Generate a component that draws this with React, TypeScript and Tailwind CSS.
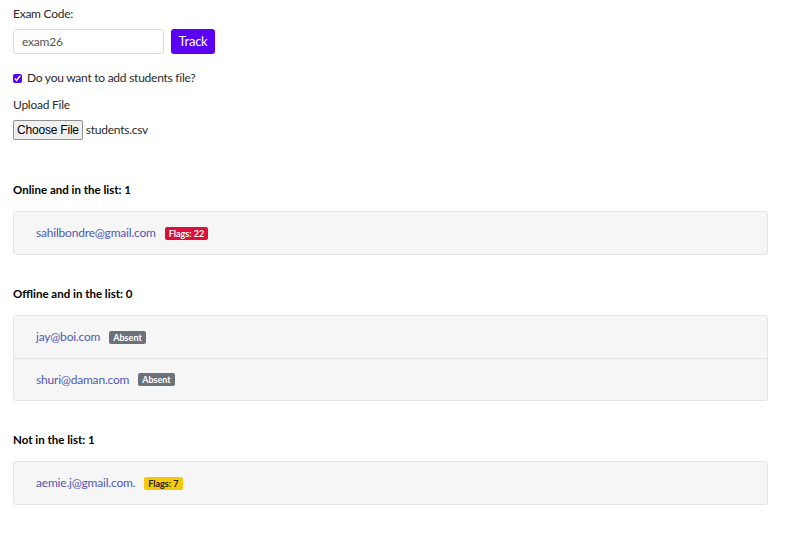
import { useState } from 'react';

type Entry = { email: string; badge: string; tone: 'red' | 'gray' | 'yellow' };

const sections: { title: string; items: Entry[] }[] = [
  {
    title: 'Online and in the list: 1',
    items: [{ email: 'sahilbondre@gmail.com', badge: 'Flags: 22', tone: 'red' }],
  },
  {
    title: 'Offline and in the list: 0',
    items: [
      { email: 'jay@boi.com', badge: 'Absent', tone: 'gray' },
      { email: 'shuri@daman.com', badge: 'Absent', tone: 'gray' },
    ],
  },
  {
    title: 'Not in the list: 1',
    items: [{ email: 'aemie.j@gmail.com.', badge: 'Flags: 7', tone: 'yellow' }],
  },
];

const toneClass = {
  red: 'bg-[#dc0f3c] text-white',
  gray: 'bg-[#6b717a] text-white',
  yellow: 'bg-[#f7c70a] text-[#222]',
};

function Badge({ text, tone }: { text: string; tone: Entry['tone'] }) {
  return (
    <span
      className={`ml-[9px] inline-flex h-[13px] items-center rounded-[2px] px-[4px] text-[9px] font-bold leading-none tracking-normal ${toneClass[tone]}`}
    >
      {text}
    </span>
  );
}

export default function App() {
  const [code, setCode] = useState('exam26');
  const [withFile, setWithFile] = useState(true);

  return (
    <div
      className="min-h-[537px] bg-white px-[13px] pt-[4px] text-[12px] tracking-[-0.25px] text-[#2b2b2b]"
      style={{ fontFamily: 'Lato, "Open Sans", sans-serif' }}
    >
      <div className="leading-[20px]">Exam Code:</div>
      <div className="mt-[5px] flex gap-[7px]">
        <input
          value={code}
          onChange={(e) => setCode(e.target.value)}
          className="h-[25px] w-[151px] rounded-[3px] border border-[#dcdcdc] px-[8px] text-[12px] tracking-[-0.2px] text-[#555] outline-none"
        />
        <button className="h-[25px] w-[44px] rounded-[3px] bg-[#5c00f5] text-[13px] text-white">
          Track
        </button>
      </div>

      <label className="mt-[14px] flex h-[20px] items-center gap-[5px]">
        <input
          type="checkbox"
          checked={withFile}
          onChange={(e) => setWithFile(e.target.checked)}
          className="m-0 h-[9px] w-[9px] accent-[#5c00f5]"
        />
        <span>Do you want to add students file?</span>
      </label>

      <div className="mt-[7px] leading-[20px]">Upload File</div>
      <div className="mt-[5px] flex h-[20px] items-center">
        <span
          className="flex h-[20px] items-center rounded-[2px] border border-[#8f8f8f] bg-[#efefef] px-[3px] text-[12px] tracking-[-0.2px] text-black"
          style={{ fontFamily: '"Liberation Sans", Arial, sans-serif' }}
        >
          Choose File
        </span>
        <span className="ml-[3px]">students.csv</span>
      </div>

      <div className="mt-[40px] flex flex-col">
        {sections.map((s, i) => (
          <div key={s.title} className={i > 0 ? 'mt-[29px]' : ''}>
            <div className="text-[11.5px] font-bold leading-[20px] tracking-normal text-black">{s.title}</div>
            <div className="mt-[11px] w-[755px] rounded-[3px] border border-[#e4e4e4] bg-[#f6f6f6]">
              {s.items.map((it, j) => (
                <div
                  key={it.email}
                  className={`flex h-[42px] items-center pl-[22px] ${j > 0 ? 'border-t border-[#e4e4e4]' : ''}`}
                >
                  <span className="text-[12px] tracking-[-0.2px] text-[#5058b4]">{it.email}</span>
                  <Badge text={it.badge} tone={it.tone} />
                </div>
              ))}
            </div>
          </div>
        ))}
      </div>
    </div>
  );
}
